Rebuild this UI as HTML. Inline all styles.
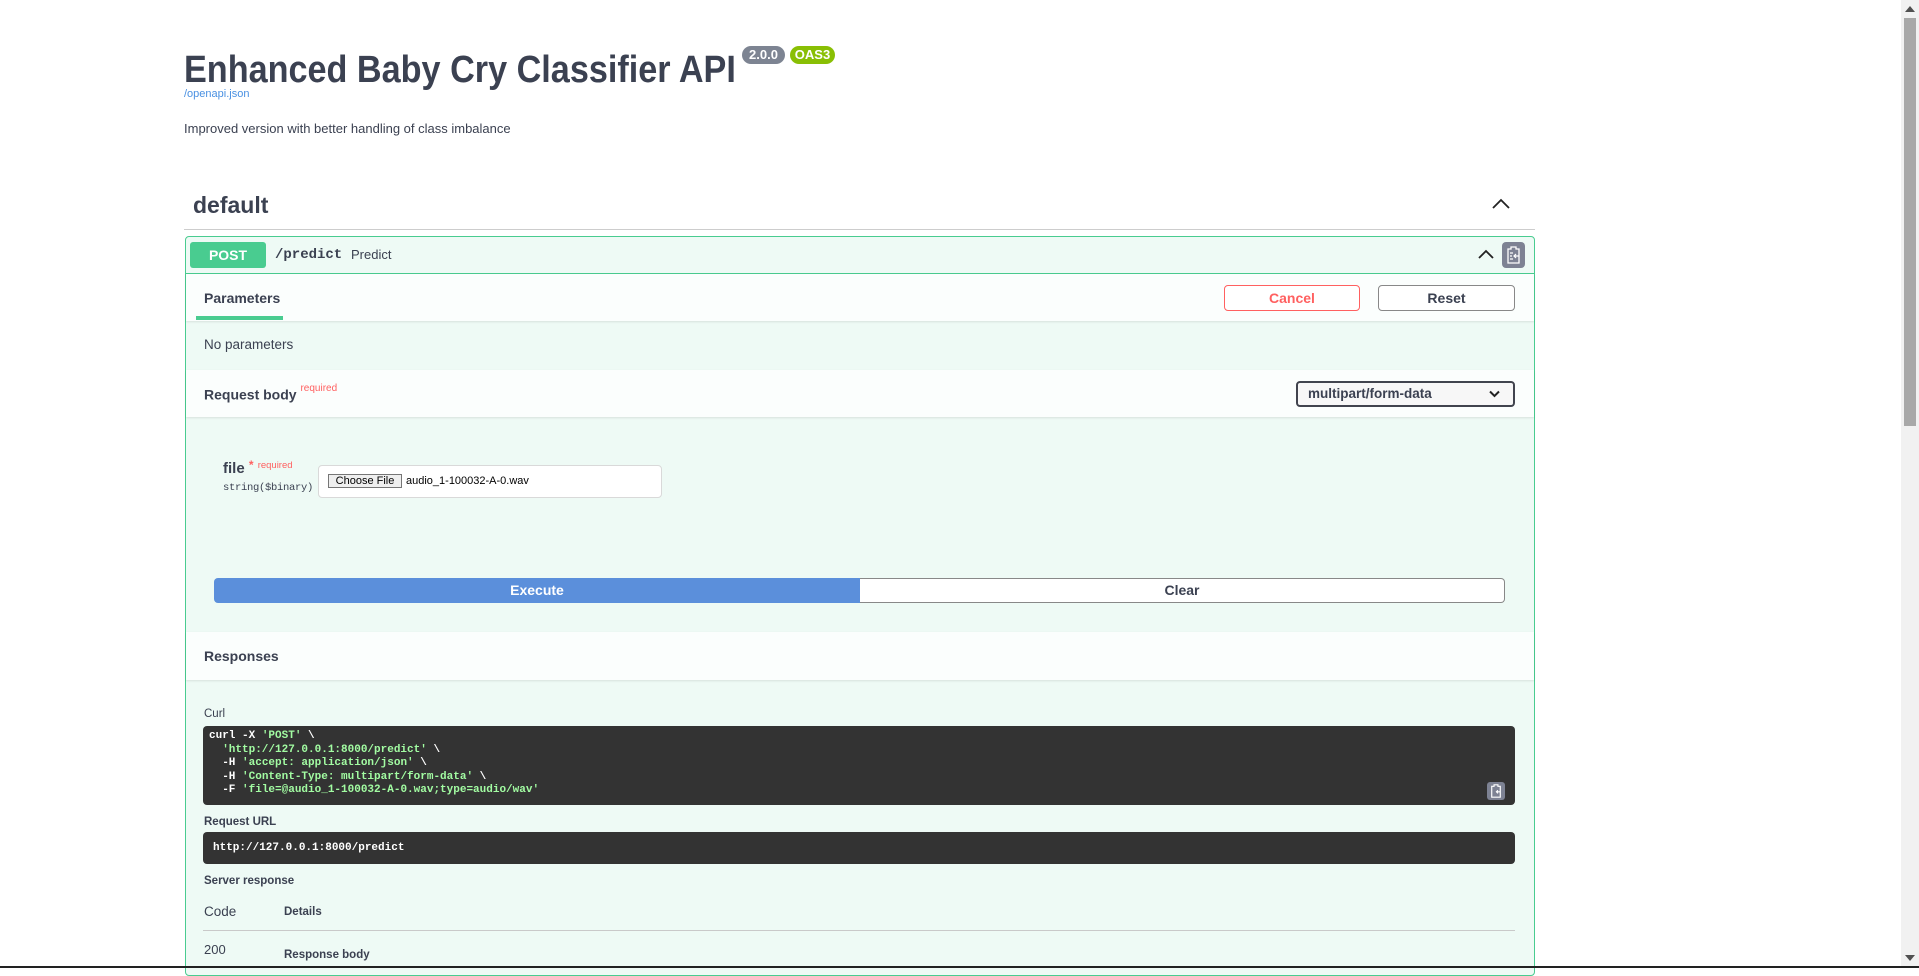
<!DOCTYPE html>
<html><head><meta charset="utf-8"><style>
*{margin:0;padding:0;box-sizing:border-box}
body{width:1919px;height:968px;overflow:hidden;background:#fff;font-family:"Liberation Sans",Arial,sans-serif;color:#3b4151;position:relative}
.a{position:absolute;white-space:nowrap}
.mono{font-family:"Liberation Mono",monospace}
.btn{position:absolute;border:2px solid #888;border-radius:4px;background:#fff;font-weight:bold;font-size:14px;display:flex;align-items:center;justify-content:center}
</style></head><body>
<div class="a" style="left:184px;top:47px;font-size:38px;font-weight:bold;transform:scaleX(.9);transform-origin:left top;line-height:46px">Enhanced Baby Cry Classifier API</div>
<div class="a" style="left:742px;top:46px;width:43px;height:18px;border-radius:9px;background:#7d8492;color:#fff;font-size:13px;font-weight:bold;text-align:center;line-height:18px">2.0.0</div>
<div class="a" style="left:790px;top:46px;width:45px;height:18px;border-radius:9px;background:#89bf04;color:#fff;font-size:13px;font-weight:bold;text-align:center;line-height:18px">OAS3</div>
<div class="a" style="left:184px;top:88px;font-size:11px;color:#4990e2">/openapi.json</div>
<div class="a" style="left:184px;top:121px;font-size:13px">Improved version with better handling of class imbalance</div>

<div class="a" style="left:193px;top:192px;font-size:23px;font-weight:bold">default</div>
<svg class="a" style="left:1492px;top:198px" width="18" height="12" viewBox="0 0 18 12"><path d="M1 10 L9 2 L17 10" fill="none" stroke="#222" stroke-width="1.8"/></svg>
<div class="a" style="left:184px;top:229px;width:1351px;height:1px;background:#cdcdcd"></div>

<div class="a" style="left:185px;top:236px;width:1350px;height:740px;border:1px solid #49cc90;border-radius:4px;background:#eefaf5"></div>
<div class="a" style="left:190px;top:242px;width:76px;height:26px;background:#49cc90;border-radius:3px;color:#fff;font-weight:bold;font-size:14px;text-align:center;line-height:26px">POST</div>
<div class="a mono" style="left:275px;top:247px;font-size:14px;font-weight:bold">/predict</div>
<div class="a" style="left:351px;top:247px;font-size:13px">Predict</div>
<svg class="a" style="left:1478px;top:249px" width="16" height="11" viewBox="0 0 16 11"><path d="M1 9 L8 2 L15 9" fill="none" stroke="#222" stroke-width="1.8"/></svg>
<div class="a" style="left:1502px;top:242px;width:23px;height:26px;background:#7d8293;border-radius:4px"></div>
<svg class="a" style="left:1506px;top:246px" width="15" height="18" viewBox="0 0 15 18"><path d="M2 3h3V1h5v2h3v14H2z" fill="none" stroke="#fff" stroke-width="1.3"/><path d="M4 7h3M4 10h2M4 13h3M13 10H8M10 8l-2 2 2 2" stroke="#fff" stroke-width="1.2" fill="none"/></svg>
<div class="a" style="left:186px;top:273px;width:1348px;height:1px;background:#49cc90"></div>

<div class="a" style="left:186px;top:274px;width:1348px;height:47px;background:#fbfefd;box-shadow:0 1px 2px rgba(0,0,0,.1)"></div>
<div class="a" style="left:204px;top:290px;font-size:14px;font-weight:bold">Parameters</div>
<div class="a" style="left:196px;top:316px;width:87px;height:4px;background:#49cc90"></div>
<div class="btn" style="left:1224px;top:285px;width:136px;height:26px;border-color:#ff6060;color:#ff6060;border-width:1.5px">Cancel</div>
<div class="btn" style="left:1378px;top:285px;width:137px;height:26px;border-color:#888;border-width:1.5px">Reset</div>
<div class="a" style="left:204px;top:337px;font-size:13.5px">No parameters</div>

<div class="a" style="left:186px;top:370px;width:1348px;height:47px;background:#fbfefd;box-shadow:0 1px 2px rgba(0,0,0,.1)"></div>
<div class="a" style="left:204px;top:386px;font-size:14px;font-weight:bold">Request body <sup style="color:#ff6060;font-size:10px;font-weight:normal;position:relative;top:-3px">required</sup></div>
<div class="a" style="left:1296px;top:381px;width:219px;height:26px;border:2px solid #41444e;border-radius:4px;background:#f7f7f7;font-size:13.5px;font-weight:bold;line-height:22px;padding-left:10px">multipart/form-data</div>
<svg class="a" style="left:1489px;top:390px" width="11" height="8" viewBox="0 0 11 8"><path d="M1 1.5 L5.5 6 L10 1.5" fill="none" stroke="#222" stroke-width="2"/></svg>

<div class="a" style="left:223px;top:460px;font-size:15px;font-weight:bold">file <span style="color:#ff6060;font-size:12px;position:relative;top:-4px">*</span> <span style="color:#ff6060;font-size:9.5px;font-weight:normal;position:relative;top:-5px">required</span></div>
<div class="a mono" style="left:223px;top:482px;font-size:10.5px;letter-spacing:-0.3px">string($binary)</div>
<div class="a" style="left:318px;top:465px;width:344px;height:33px;border:1px solid #d9d9d9;border-radius:4px;background:#fff"></div>
<div class="a" style="left:328px;top:474px;width:74px;height:14px;border:1px solid #767676;background:#efefef;font-size:11px;line-height:12px;text-align:center;color:#000">Choose File</div>
<div class="a" style="left:406px;top:475px;font-size:11px;color:#000">audio_1-100032-A-0.wav</div>

<div class="a" style="left:214px;top:578px;width:646px;height:25px;background:#5b8fdb;border-radius:4px 0 0 4px;color:#fff;font-weight:bold;font-size:14px;text-align:center;line-height:25px">Execute</div>
<div class="a" style="left:860px;top:578px;width:645px;height:25px;border:1.5px solid #888;border-left:none;border-radius:0 4px 4px 0;background:#fff;font-weight:bold;font-size:14px;text-align:center;line-height:22px">Clear</div>

<div class="a" style="left:186px;top:632px;width:1348px;height:48px;background:#fbfefd;box-shadow:0 1px 2px rgba(0,0,0,.1)"></div>
<div class="a" style="left:204px;top:648px;font-size:14px;font-weight:bold">Responses</div>

<div class="a" style="left:204px;top:708px;font-size:11.5px">Curl</div>
<div class="a" style="left:203px;top:726px;width:1312px;height:79px;background:#333;border-radius:4px"></div>
<pre class="a mono" style="white-space:pre;left:209px;top:730px;font-size:11px;line-height:13.6px;font-weight:bold;color:#fff">curl -X <span style="color:#a2fca2">'POST'</span> \
  <span style="color:#a2fca2">'http://127.0.0.1:8000/predict'</span> \
  -H <span style="color:#a2fca2">'accept: application/json'</span> \
  -H <span style="color:#a2fca2">'Content-Type: multipart/form-data'</span> \
  -F <span style="color:#a2fca2">'file=@audio_1-100032-A-0.wav;type=audio/wav'</span></pre>
<div class="a" style="left:1487px;top:782px;width:18px;height:18px;background:#7d8293;border-radius:3px"></div>
<svg class="a" style="left:1490px;top:784px" width="12" height="14" viewBox="0 0 15 18"><path d="M2 3h3V1h5v2h3v14H2z" fill="none" stroke="#fff" stroke-width="1.5"/><path d="M13 10H8M10 8l-2 2 2 2" stroke="#fff" stroke-width="1.4" fill="none"/></svg>

<div class="a" style="left:204px;top:816px;font-size:11.5px;font-weight:bold">Request URL</div>
<div class="a" style="left:203px;top:832px;width:1312px;height:32px;background:#333;border-radius:4px"></div>
<div class="a mono" style="left:213px;top:842px;font-size:11px;font-weight:bold;color:#fff">http://127.0.0.1:8000/predict</div>

<div class="a" style="left:204px;top:875px;font-size:11.5px;font-weight:bold">Server response</div>
<div class="a" style="left:204px;top:904px;font-size:13.5px">Code</div>
<div class="a" style="left:284px;top:906px;font-size:11.5px;font-weight:bold">Details</div>
<div class="a" style="left:203px;top:930px;width:1312px;height:1px;background:#c9c9c9"></div>
<div class="a" style="left:204px;top:942px;font-size:13px">200</div>
<div class="a" style="left:284px;top:949px;font-size:11.5px;font-weight:bold">Response body</div>

<div class="a" style="left:0;top:966px;width:1919px;height:2px;background:#222"></div>
<div class="a" style="left:1901px;top:0;width:18px;height:966px;background:#f1f1f1"></div>
<div class="a" style="left:1904px;top:18px;width:12px;height:408px;background:#a8a8a8"></div>
<svg class="a" style="left:1905px;top:5px" width="10" height="7"><path d="M0 7L5 1L10 7Z" fill="#505050"/></svg>
<svg class="a" style="left:1905px;top:955px" width="10" height="7"><path d="M0 0L5 6L10 0Z" fill="#505050"/></svg>
</body></html>
